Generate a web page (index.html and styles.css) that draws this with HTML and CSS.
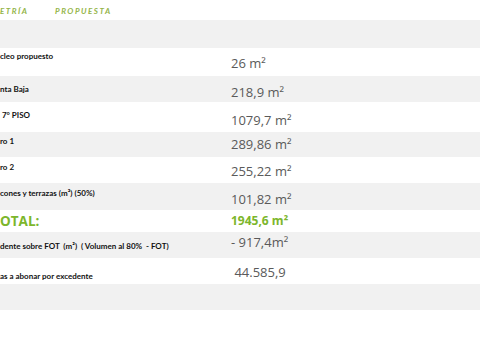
FILE: index.html
```html
<!DOCTYPE html>
<html lang="es">
<head>
<meta charset="utf-8">
<title>Superficies</title>
<link rel="stylesheet" href="styles.css">
</head>
<body>
<div class="table">
  <div class="head">
    <span class="h1">ETRÍA</span>
    <span class="h2">PROPUESTA</span>
  </div>
  <div class="row gray blank28"></div>
  <div class="row r1"><div class="lab">cleo propuesto</div><div class="val">26 m²</div></div>
  <div class="row gray r2"><div class="lab">nta Baja</div><div class="val">218,9 m²</div></div>
  <div class="row r3"><div class="lab">&nbsp;7° PISO</div><div class="val">1079,7 m²</div></div>
  <div class="row gray r4"><div class="lab">ro 1</div><div class="val">289,86 m²</div></div>
  <div class="row r5"><div class="lab">ro 2</div><div class="val">255,22 m²</div></div>
  <div class="row gray r6"><div class="lab">cones y terrazas (m²) (50%)</div><div class="val">101,82 m²</div></div>
  <div class="row total"><div class="lab">OTAL:</div><div class="val">1945,6 m²</div></div>
  <div class="row gray r8"><div class="lab">dente sobre FOT &nbsp;(m²) &nbsp;( Volumen al 80% &nbsp;- FOT)</div><div class="val">- 917,4m²</div></div>
  <div class="row r9"><div class="lab">as a abonar por excedente</div><div class="val">&nbsp;44.585,9</div></div>
  <div class="row gray blank26"></div>
</div>
</body>
</html>
```

FILE: styles.css
```css
html, body {
  margin: 0;
  padding: 0;
  background: #ffffff;
  overflow: hidden;
}
body {
  width: 480px;
  height: 354px;
  font-family: "Open Sans", "DejaVu Sans", sans-serif;
}
.table {
  display: flex;
  flex-direction: column;
}
.head {
  height: 20px;
  display: flex;
  align-items: center;
  font-family: "Lato", "Open Sans", sans-serif;
  font-size: 8px;
  font-weight: 700;
  font-style: italic;
  letter-spacing: 1.5px;
  color: #93b447;
  padding-top: 2px;
  box-sizing: border-box;
}
.h1 { width: 55px; }
.row {
  display: grid;
  grid-template-columns: 231px 1fr;
  align-items: start;
  --lt: 5px;
  --vt: 6px;
}
.gray { background: #f1f1f1; }
.blank28 { height: 28px; }
.blank26 { height: 26px; }
.lab {
  font-family: "Lato", "Open Sans", sans-serif;
  font-size: 8px;
  line-height: 10px;
  font-weight: 700;
  color: #111111;
  padding-top: var(--lt);
  white-space: nowrap;
}
.val {
  font-size: 13px;
  line-height: 16px;
  color: #5a5a5a;
  padding-top: var(--vt);
  white-space: nowrap;
}
.r1 { height: 28px; --lt: 3px; --vt: 7px; }
.r2 { height: 26px; --lt: 8px; --vt: 8px; }
.r3 { height: 30px; --lt: 8px; --vt: 10px; }
.r4 { height: 25px; --lt: 4px; --vt: 4px; }
.r5 { height: 26px; --lt: 5px; --vt: 6px; }
.r6 { height: 27px; --lt: 5px; --vt: 8px; }
.r8 { height: 26px; --lt: 9px; --vt: 2px; }
.r9 { height: 26px; --lt: 13px; --vt: 6px; }
.total { height: 22px; }
.total .lab {
  font-family: "Open Sans", sans-serif;
  font-size: 13.5px;
  line-height: 18px;
  font-weight: 700;
  color: #7cb62c;
  padding-top: 2px;
}
.total .val {
  font-size: 12px;
  line-height: 14px;
  font-weight: 700;
  color: #7cb62c;
  padding-top: 4px;
}
```
